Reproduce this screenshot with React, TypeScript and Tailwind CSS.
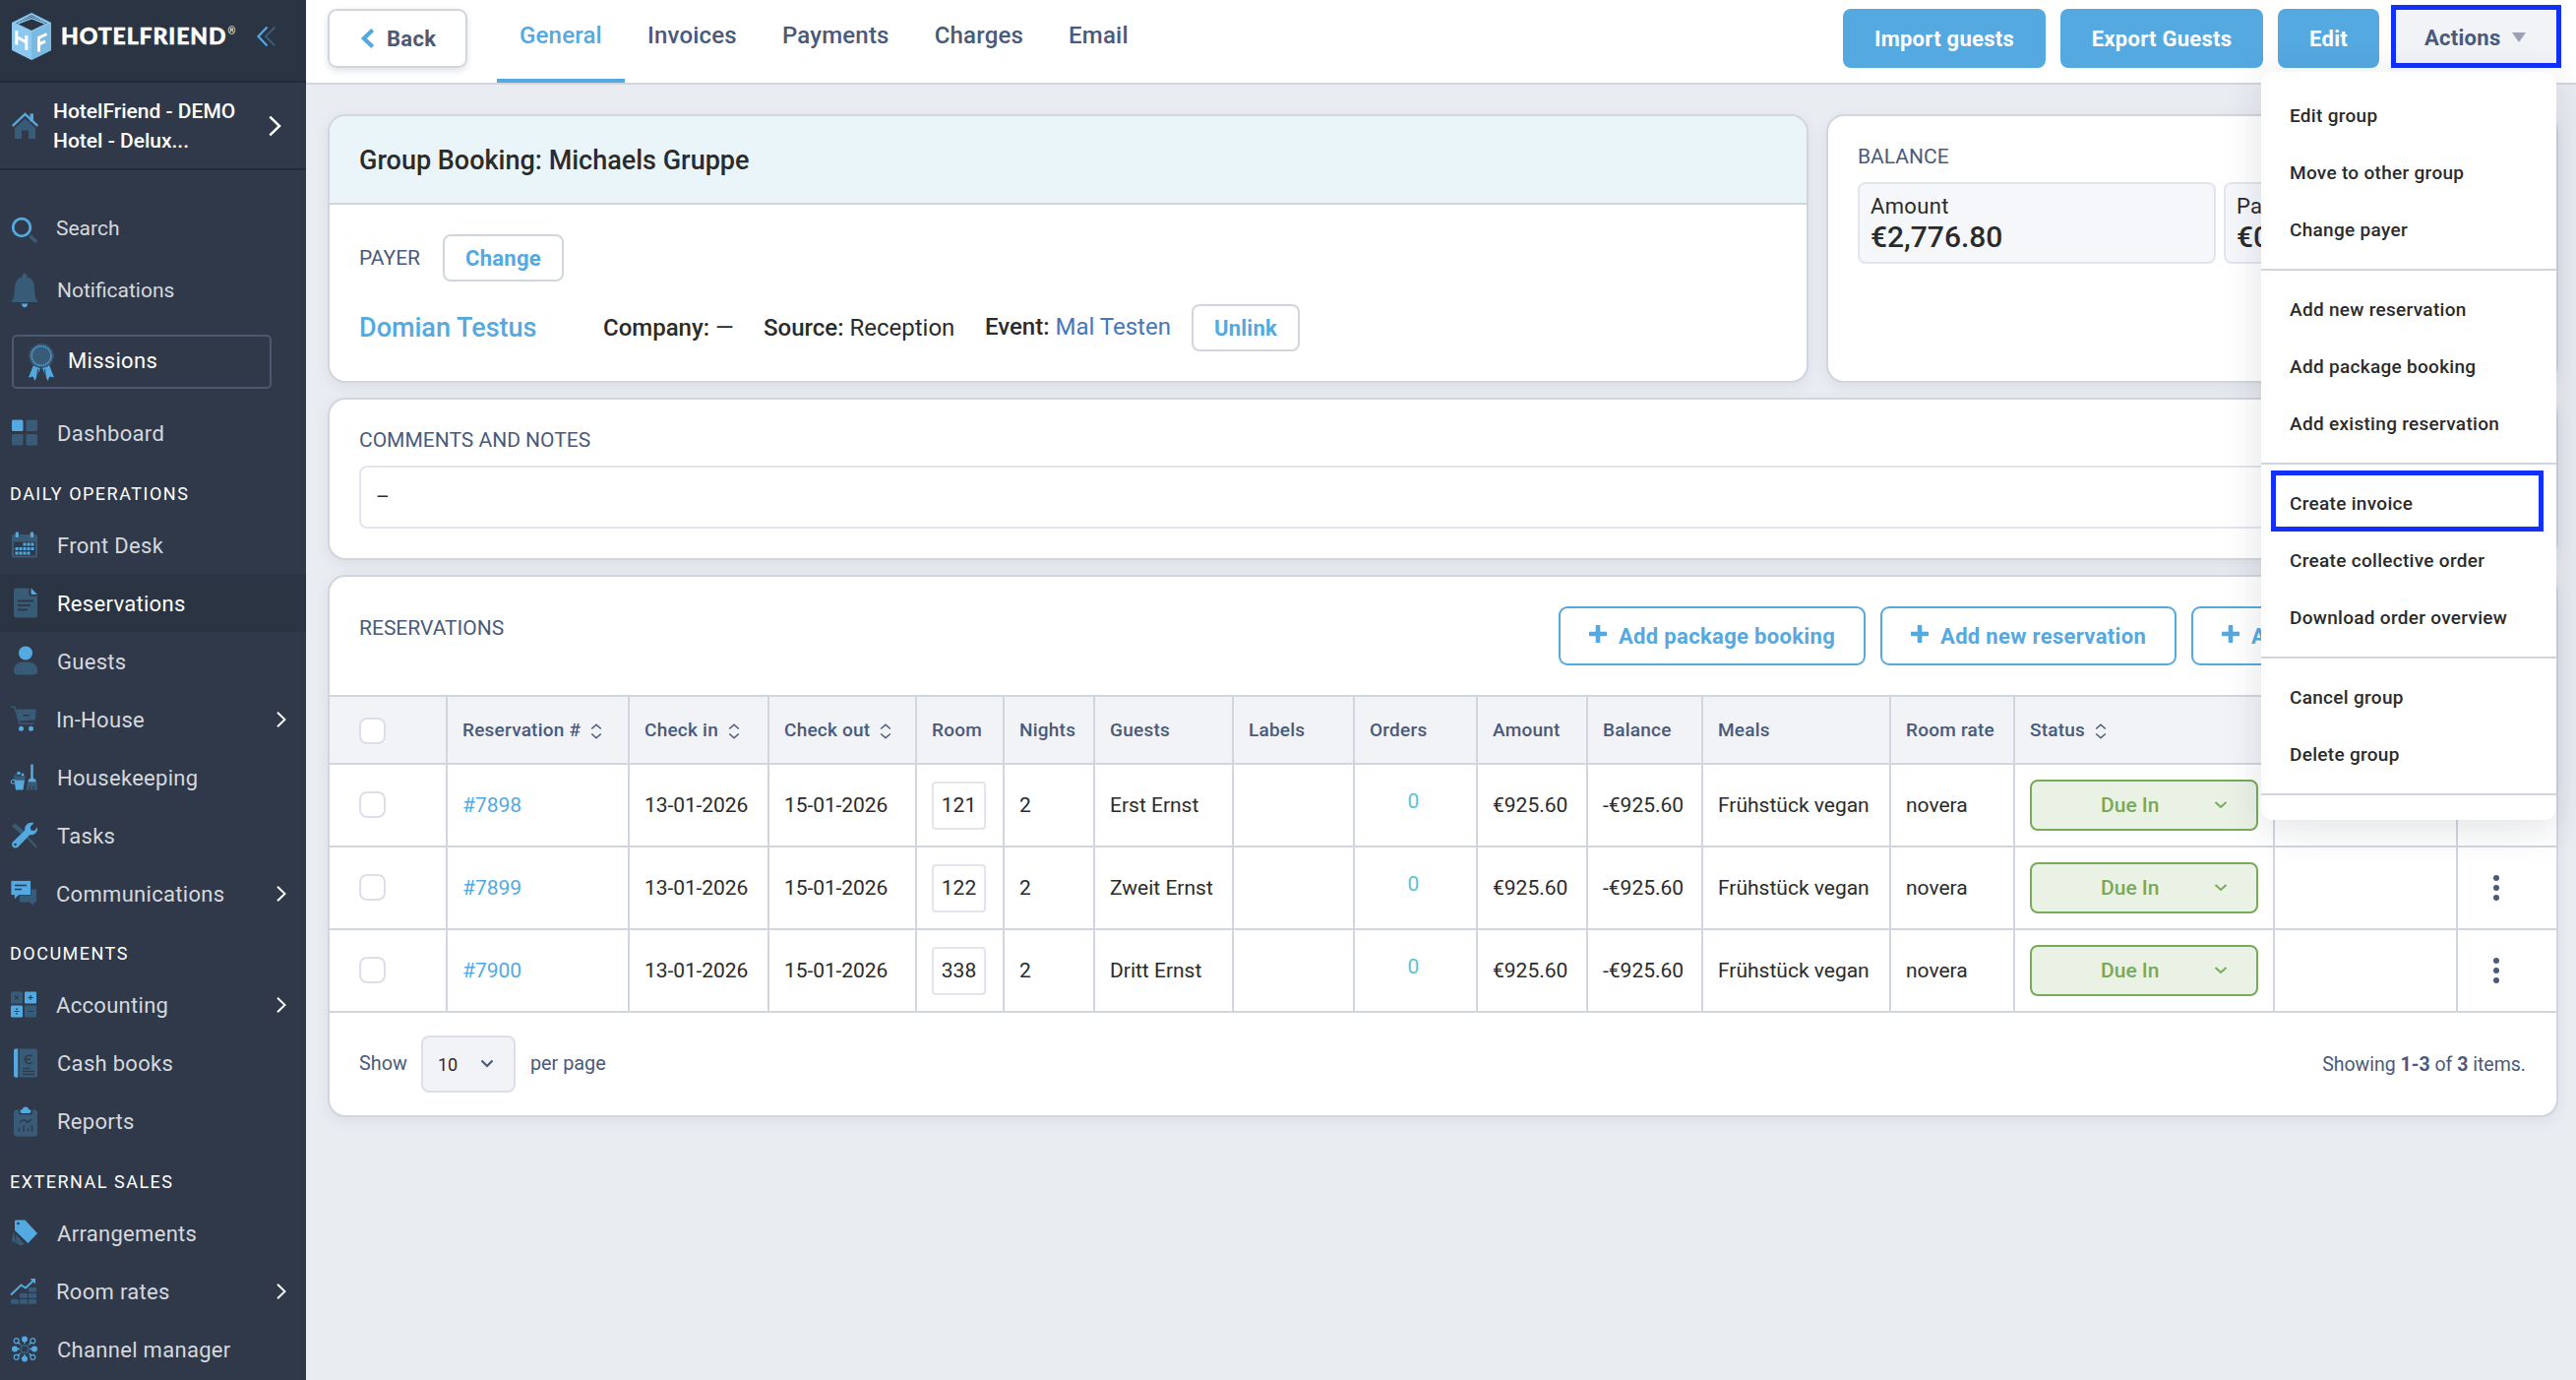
import React from "react";

type IconProps = { className?: string };

const B = "#54a9e0";
const S = "#385b78";
const D = "#303949";

function Glyph({ children }: { children: React.ReactNode }) {
  return (
    <svg width="30" height="40" viewBox="0 0 30 40" fill="none" className="shrink-0 overflow-visible">
      {children}
    </svg>
  );
}

const SearchIcon = () => (
  <Glyph>
    <path d="M20.5 26.5 L27 33" stroke={S} strokeWidth="3.4" />
    <circle cx="12" cy="18" r="8.8" stroke={B} strokeWidth="2.8" />
  </Glyph>
);
const BellIcon = () => (
  <Glyph>
    <path d="M15 1.5c1.6 0 2.3 1 2.3 2.4v1.3c4.6 1.2 7.2 4.600 7.600 9.400.4 5 .5 9.500 1.300 12.200.3 1.200 1.800 2 1.800 3V31H2v-1.200c0-1 1.500-1.800 1.800-3 .8-2.700.9-7.200 1.300-12.200.4-4.800 3-8.200 7.600-9.400V3.900c0-1.400.7-2.400 2.300-2.400z" fill={S} />
    <path d="M12 32.500h6.200c-.2 2.200-1.400 3.700-3.100 3.700S12.200 34.700 12 32.500z" fill={B} />
  </Glyph>
);
const MissionIcon = () => (
  <svg width="26" height="38" viewBox="0 0 26 38" fill="none" className="shrink-0">
    <path d="M5 22 L0 34.500 L4.500 33.500 L6.500 38 L12 25z M21 22 L26 34.500 L21.500 33.500 L19.500 38 L14 25z" fill={B} />
    <path d="M9.500 26 L8.500 36 M16.500 26 L17.500 36" stroke={D} strokeWidth="1" />
    <circle cx="13" cy="12.500" r="12" fill={S} stroke={S} strokeWidth="1.500" strokeDasharray="2.500 1.500" />
    <circle cx="13" cy="12.500" r="9.800" fill={S} stroke={B} strokeWidth="1.600" strokeDasharray="1.200 .8" />
  </svg>
);
const DashboardIcon = () => (
  <Glyph>
    <rect x="2" y="6.500" width="11.500" height="11.500" rx="1.500" fill={B} />
    <rect x="16.500" y="6.500" width="11.500" height="11.500" rx="1.500" fill={S} />
    <rect x="2" y="21" width="11.500" height="11.500" rx="1.500" fill={S} />
    <rect x="16.500" y="21" width="11.500" height="11.500" rx="1.500" fill={S} />
  </Glyph>
);
const CalendarIcon = () => (
  <Glyph>
    <path d="M4 9h22a2 2 0 0 1 2 2v19.500a2 2 0 0 1-2 2H4a2 2 0 0 1-2-2V11a2 2 0 0 1 2-2z" fill={S} />
    <rect x="4" y="16.500" width="22" height="14" fill={D} />
    <rect x="5.700" y="6.500" width="3.200" height="5.500" rx="1" fill={B} />
    <rect x="20.900" y="6.500" width="3.200" height="5.500" rx="1" fill={B} />
    {[13.5, 17.5, 21.5].map((x) => <rect key={x} x={x} y="17.500" width="3" height="3" fill={B} />)}
    {[5.5, 9.5, 13.5, 17.5, 21.5].map((x) => <rect key={x} x={x} y="22" width="3" height="3" fill={B} />)}
    {[5.5, 9.5, 13.5, 17.5].map((x) => <rect key={x} x={x} y="26.500" width="3" height="3" fill={B} />)}
  </Glyph>
);
const DocIcon = () => (
  <Glyph>
    <path d="M6.500 4.500H19.500V10.500a2 2 0 0 0 2 2H28V32a2.500 2.500 0 0 1-2.500 2.500h-19A2.500 2.500 0 0 1 4 32V7a2.500 2.500 0 0 1 2.500-2.500z" fill={S} />
    <path d="M21.500 4.500 L28 11H22.500a1 1 0 0 1-1-1z" fill={B} />
    <path d="M8 17.500H24 M8 22H21 M8 26.500H18" stroke={D} strokeWidth="1.800" />
  </Glyph>
);
const GuestIcon = () => (
  <Glyph>
    <circle cx="16" cy="11.500" r="7" fill={B} />
    <path d="M4 29.500c0-5 3.500-9 9-9h6c5.500 0 9 4 9 9 0 2.500-1.500 4-4 4H8c-2.500 0-4-1.500-4-4z" fill={S} />
  </Glyph>
);
const CartIcon = () => (
  <Glyph>
    <path d="M1 7.200H4.800L10 24.200H24.500" stroke={S} strokeWidth="1.600" />
    <path d="M6.500 9.500H27L25.500 20.500L9.800 21.500z" fill={S} />
    <path d="M13.500 15.800H19.500" stroke={D} strokeWidth="1.600" />
    <circle cx="11.500" cy="29.200" r="2.500" fill={B} />
    <circle cx="21.500" cy="29.200" r="2.500" fill={B} />
  </Glyph>
);
const CleanIcon = () => (
  <Glyph>
    <path d="M3.500 18.500h12v3.500h-12z" fill={S} />
    <path d="M4.500 22.500H15L13.500 32.500H6z" fill={B} />
    <path d="M5.500 22.500H3a1.500 1.500 0 0 0 0 3.500h2.500" stroke={B} strokeWidth="1.200" />
    <circle cx="9" cy="15.500" r="1.800" fill={B} />
    <circle cx="13" cy="17" r="1.500" fill={B} />
    <circle cx="6" cy="17.500" r="1.300" fill={S} />
    <path d="M21.200 6.500h2.600v14.500h-2.600z" fill={B} />
    <path d="M18.500 24.500c0-3 1.500-4 4-4s4 1 4.500 4z" fill={B} />
    <path d="M18 25h9.500l.5 7.500H16.800z" fill={S} />
    <path d="M20.500 28v4.500M24 28v4.500" stroke={D} strokeWidth="1" />
  </Glyph>
);
const ToolsIcon = () => (
  <Glyph>
    <path d="M2 10.500 L5 7.500 L14.500 15 L11.500 18.500z" fill={S} />
    <path d="M17 21 L27 31.500" stroke={S} strokeWidth="2" />
    <path d="M24.500 7 L20.800 11 L21.500 14.500 L24.800 15 L28 11.500 c.6 5-3 8.300-7.800 7.800 L8.300 31.500c-1.500 1.500-3.800 1.300-5.200 0-1.400-1.400-1.400-3.700 0-5.200L15.300 14.500C14.500 9.500 19 5.500 24.500 7z" fill={B} />
    <circle cx="5.500" cy="29" r="1.300" fill={D} />
  </Glyph>
);
const ChatIcon = () => (
  <Glyph>
    <path d="M10 15.500H27V28.500H24.500V32L20 28.500H10z" fill={S} />
    <path d="M1 6.500H21.500V21.500H9L4.500 26V21.500H1z" fill={B} stroke={D} strokeWidth=".8" />
    <path d="M5 11.500H17 M5 15.500H12" stroke={D} strokeWidth="1.700" />
  </Glyph>
);
const CalcIcon = () => (
  <Glyph>
    <rect x="1" y="5.500" width="12" height="12" rx="1.200" fill={S} />
    <rect x="15" y="5.500" width="12" height="12" rx="1.200" fill={B} />
    <rect x="1" y="19.500" width="12" height="12" rx="1.200" fill={B} />
    <rect x="15" y="19.500" width="12" height="12" rx="1.200" fill={S} />
    <path d="M5.200 9.700l3.600 3.600m0-3.600l-3.600 3.600M18.500 11.500h5m-2.500-2.500v5M4.500 25.500h5M18.500 25.500h5" stroke={D} strokeWidth="1.200" />
    <circle cx="7" cy="23.200" r=".9" fill={D} />
    <circle cx="7" cy="27.800" r=".9" fill={D} />
  </Glyph>
);
const BookIcon = () => (
  <Glyph>
    <rect x="4" y="4.500" width="24" height="29" rx="2" fill={S} />
    <path d="M6 4.500h2.200v29H6a2 2 0 0 1-2-2v-25a2 2 0 0 1 2-2z" fill={B} />
    <path d="M9.200 4.500v29" stroke={D} strokeWidth="1" />
    <path d="M22.500 12.200a4.200 4.200 0 1 0 0 6.300M14.500 15.300h6.500" stroke={D} strokeWidth="1.500" />
    <path d="M13 24.500h7.500M13 27.500h12M13 30.500h12" stroke={D} strokeWidth="1.300" />
  </Glyph>
);
const ReportIcon = () => (
  <Glyph>
    <rect x="4" y="7.500" width="24" height="27" rx="3" fill={S} />
    <path d="M9 7v3.500a2 2 0 0 0 2 2h10a2 2 0 0 0 2-2V7z" fill={D} />
    <path d="M10.500 7.500h2c.5-2 1.700-3 3.500-3s3 1 3.500 3h2V9a2 2 0 0 1-2 2h-7a2 2 0 0 1-2-2z" fill={B} />
    <path d="M10 20.500l4-3 4 2.500 4-2.500M9.500 26v3.500M14 23.500v6M18.500 26v3.500M22.500 23v6.500" stroke={D} strokeWidth="1.500" />
  </Glyph>
);
const TagIcon = () => (
  <Glyph>
    <path d="M4 17 L2 26.500 L6 28.500z M6 20 L6.500 29 L11 31.500 L15 30z" fill={S} />
    <path d="M6 5.500H15.500L28 19 L18.500 29 L5 16V7a1.500 1.500 0 0 1 1-1.500z" fill={B} />
    <circle cx="8.500" cy="9" r="1.300" fill={D} />
  </Glyph>
);
const RatesIcon = () => (
  <Glyph>
    <path d="M1 22.500 L11.500 12.500 L16 15.500 L24 8" stroke={B} strokeWidth="2" />
    <path d="M20.500 6h5.500v5.500z" fill={B} />
    {[[1, 27], [10, 27], [19, 27], [10, 21], [19, 21], [19, 15]].map(([x, y]) => (
      <rect key={`${x}-${y}`} x={x} y={y} width="8" height="4.800" rx=".8" fill={S} />
    ))}
  </Glyph>
);
const ChannelIcon = () => (
  <Glyph>
    <rect x="11.500" y="15" width="7" height="7" rx="1" stroke={S} strokeWidth="1.800" />
    <path d="M15 8v5M15 24v5M5 18.500h5M20 18.500h5" stroke={B} strokeWidth="1.400" />
    <path d="M8 11.500l2.500 2.500M22 11.500l-2.500 2.500M8 25.500l2.500-2.500M22 25.500l-2.500-2.500" stroke={B} strokeWidth="1.200" />
    {[[15, 8.5], [15, 28.5], [5, 18.5], [25, 18.5]].map(([x, y]) => <circle key={`${x}-${y}`} cx={x} cy={y} r="3" fill={B} />)}
    {[[6.7, 10.2], [23.3, 10.2], [6.7, 26.8], [23.3, 26.8]].map(([x, y]) => (
      <circle key={`${x}-${y}`} cx={x} cy={y} r="2.500" stroke={B} strokeWidth="1.200" />
    ))}
  </Glyph>
);

const Logo = () => (
  <svg width="40" height="48" viewBox="0 0 40 48" fill="none" className="shrink-0">
    <path d="M0 10 L20 0 L40 10 L40 38 L20 48 L0 38z" fill="#8cc8f0" />
    <path d="M20 19.500 L40 10 V38 L20 48z" fill="#7ab9e0" />
    <path d="M20 2.200 L36 10.200 L20 18 L4 10.200z" fill="#2b3443" />
    <path d="M3 10.500 L20 3.500 L37 10.500" stroke="#8cc8f0" strokeWidth="1" />
    <path d="M6 11 L20 5.500 L34 11" stroke="#8cc8f0" strokeWidth="1.600" />
    <path d="M4.800 18v14.500M14.800 23v15M4.800 24.500l10 5.500" stroke="#fff" strokeWidth="3" />
    <path d="M27.500 39.500V25.500L35.500 21.500M27.500 32l6.500-3.200" stroke="#fff" strokeWidth="3" />
  </svg>
);

const HomeIcon = () => (
  <svg width="27" height="27" viewBox="0 0 27 27" fill="none" className="shrink-0">
    <path d="M13.500 6.500 L24 16V27H17V18.500H10V27H3V16z" fill={S} />
    <path d="M18.500 1.500h3.500v8h-3.500z" fill={B} />
    <path d="M.8 14 L13.500 1.800 L26.200 14" stroke={B} strokeWidth="2.400" />
  </svg>
);

const ChevronRight = ({ className }: IconProps) => (
  <svg viewBox="0 0 10 16" fill="none" className={className}>
    <path d="M1 .8 L8.500 8 L1 15.200" stroke="#fff" strokeWidth="1.900" />
  </svg>
);

type Item = { label: string; icon: () => React.ReactElement; sub?: boolean; active?: boolean };

const groups: { title: string; items: Item[] }[] = [
  {
    title: "DAILY OPERATIONS",
    items: [
      { label: "Front Desk", icon: CalendarIcon },
      { label: "Reservations", icon: DocIcon, active: true },
      { label: "Guests", icon: GuestIcon },
      { label: "In-House", icon: CartIcon, sub: true },
      { label: "Housekeeping", icon: CleanIcon },
      { label: "Tasks", icon: ToolsIcon },
      { label: "Communications", icon: ChatIcon, sub: true },
    ],
  },
  {
    title: "DOCUMENTS",
    items: [
      { label: "Accounting", icon: CalcIcon, sub: true },
      { label: "Cash books", icon: BookIcon },
      { label: "Reports", icon: ReportIcon },
    ],
  },
  {
    title: "EXTERNAL SALES",
    items: [
      { label: "Arrangements", icon: TagIcon },
      { label: "Room rates", icon: RatesIcon, sub: true },
      { label: "Channel manager", icon: ChannelIcon },
    ],
  },
];

function NavRow({ item, first }: { item: Item; first: boolean }) {
  const Icon = item.icon;
  return (
    <div className={item.active ? "flex h-[59px] items-center bg-[#2b3443] pl-[10px] text-white" : "flex h-[59px] items-center pl-[10px] text-[#d5d8dd]"}>
      <Icon />
      <span className={`${item.sub ? "ml-[17px]" : "ml-[18px]"} ${first ? "pt-px" : "pb-px"} text-[22px]`}>{item.label}</span>
      {item.sub && <ChevronRight className={first ? "mr-[20px] ml-auto h-[16px] w-[10px]" : "mr-[20px] mb-px ml-auto h-[16px] w-[10px]"} />}
    </div>
  );
}

function Sidebar() {
  return (
    <aside className="flex w-[311px] shrink-0 flex-col bg-[#303949] tracking-[0.3px]">
      <div className="flex h-[84px] items-start border-b-2 border-[#222b3b] bg-[#2b3443] pt-[13px] pl-[12px]">
        <Logo />
        <div className="ml-[10px] flex h-[46px] w-[199px] items-center">
          <span className="font-[Lato] text-[23px] font-black tracking-[0.9px] text-white [-webkit-text-stroke:0.5px_white]">HOTELFRIEND</span>
          <span className="mb-[10px] ml-px text-[10px] text-white">®</span>
        </div>
        <svg width="20" height="20" viewBox="0 0 20 20" fill="none" className="mt-[14px]">
          <path d="M18.500 .5 L9 10 L18.500 19.500" stroke={S} strokeWidth="2.200" />
          <path d="M10.500 .5 L1.500 10 L10.500 19.500" stroke={B} strokeWidth="2.200" />
        </svg>
      </div>
      <div className="flex h-[89px] items-center border-b-2 border-[#222b3b] pl-[12px]">
        <HomeIcon />
        <div className="ml-[15px] text-[21px] leading-[30px] font-medium tracking-normal text-white">
          HotelFriend - DEMO
          <br />
          Hotel - Delux...
        </div>
        <ChevronRight className="mr-[25px] ml-auto h-[22px] w-[13px]" />
      </div>
      <div className="mt-[30px] flex h-[59px] items-center pl-[10px] text-[21px] tracking-normal text-[#d5d8dd]">
        <SearchIcon />
        <span className="ml-[17px] pt-px">Search</span>
      </div>
      <div className="mt-[4px] flex h-[59px] items-center pl-[10px] text-[21px] tracking-normal text-[#d5d8dd]">
        <BellIcon />
        <span className="ml-[18px] pt-px">Notifications</span>
      </div>
      <div className="mt-[15px] ml-[12px] flex h-[55px] w-[264px] items-center rounded-[5px] border-2 border-[#4b5872] pl-[15px] text-[22px] text-white">
        <MissionIcon />
        <span className="mb-[2px] ml-[14px]">Missions</span>
      </div>
      <div className="mt-[15px] flex h-[59px] items-center pl-[10px] text-[22px] text-[#d5d8dd]">
        <DashboardIcon />
        <span className="ml-[18px] pt-px">Dashboard</span>
      </div>
      {groups.map((g, gi) => (
        <div key={g.title}>
          <div className={`${gi === 0 ? "pt-[9px]" : "pt-[7px]"} flex h-[55px] items-center pl-[10px] text-[18px] tracking-[1.5px] text-white`}>{g.title}</div>
          {g.items.map((i) => (
            <NavRow key={i.label} item={i} first={gi === 0} />
          ))}
        </div>
      ))}
    </aside>
  );
}

const menuGroups = [
  ["Edit group", "Move to other group", "Change payer"],
  ["Add new reservation", "Add package booking", "Add existing reservation"],
  ["Create invoice", "Create collective order", "Download order overview"],
  ["Cancel group", "Delete group"],
];

function ActionsMenu() {
  return (
    <div className="absolute top-[73px] right-[20px] z-20 h-[760px] w-[300px] rounded-[12px] bg-white pt-[15px] shadow-[0_8px_40px_rgba(40,50,70,0.14)]">
      {menuGroups.map((g) => (
        <div key={g[0]} className="mb-[10px] border-b-2 border-[#d1d5de] pb-[11px]">
          {g.map((label) => (
            <div key={label} className="relative flex h-[58px] items-center pt-[2px] pl-[29px] text-[19px] font-medium tracking-[0.3px] text-[#2b2b2b]">
              {label}
              {label === "Create invoice" && (
                <span className="absolute top-[-4px] left-[10px] h-[62px] w-[277px] border-5 border-[#1230fa]" />
              )}
            </div>
          ))}
        </div>
      ))}
    </div>
  );
}

function TopBar() {
  return (
    <header className="relative flex h-[86px] items-start border-b-2 border-[#d1d5de] bg-white pl-[22px]">
      <button className="mt-[9px] flex h-[60px] w-[142px] items-center rounded-[9px] border-2 border-[#d1d5de] pl-[31px] text-[22px] font-bold tracking-[0.3px] text-[#4a5a7a] shadow-[0_3px_6px_rgba(60,70,90,0.15)]">
        <svg width="15" height="20" viewBox="0 0 15 20" fill="none">
          <path d="M12.700 1.500 L3.800 10 L12.700 18.500" stroke={B} strokeWidth="4.200" />
        </svg>
        <span className="ml-[12px]">Back</span>
      </button>
      <nav className="ml-[30px] flex h-[84px] text-[24px] font-medium tracking-[0.2px] text-[#4a5a7a]">
        <span className="border-b-4 border-[#54a9e0] px-[23px] pt-[18px] leading-[36px] text-[#54a9e0]">General</span>
        <span className="px-[23px] pt-[18px] leading-[36px]">Invoices</span>
        <span className="px-[23px] pt-[18px] leading-[36px]">Payments</span>
        <span className="px-[23px] pt-[18px] leading-[36px]">Charges</span>
        <span className="px-[23px] pt-[18px] leading-[36px]">Email</span>
      </nav>
      <div className="mt-[5px] mr-[15px] ml-auto flex text-[22px] font-bold tracking-[0.27px] text-white">
        <button className="mt-[4px] h-[60px] w-[206px] rounded-[8px] bg-[#54a9e0]">Import guests</button>
        <button className="mt-[4px] ml-[15px] h-[60px] w-[206px] rounded-[8px] bg-[#54a9e0]">Export Guests</button>
        <button className="mt-[4px] ml-[15px] h-[60px] w-[103px] rounded-[8px] bg-[#54a9e0]">Edit</button>
        <button className="ml-[12px] flex h-[64px] w-[173px] items-center border-5 border-[#1230fa] bg-[#f1f3f7] pt-[2px] pl-[29px] text-[#4a5a7a]">
          Actions
          <svg width="14" height="10" viewBox="0 0 14 10" className="ml-[12px]">
            <path d="M0 0H14L7 10z" fill="#9aa3b5" />
          </svg>
        </button>
      </div>
      <ActionsMenu />
    </header>
  );
}

function Sort() {
  return (
    <svg width="14" height="16" viewBox="0 0 14 16" fill="none" className="mt-[3px] ml-[9px]">
      <path d="M2.200 5.500 L7 1.200 L11.800 5.500 M2.200 10.500 L7 14.800 L11.800 10.500" stroke="#4a5a7a" strokeWidth="1.500" />
    </svg>
  );
}

const cols =
  "grid grid-cols-[118px_185px_142px_150px_89px_92px_141px_123px_125px_112px_117px_191px_126px_264px_186px_102px]";
const heads: [string, boolean?][] = [
  ["Reservation #", true], ["Check in", true], ["Check out", true], ["Room"], ["Nights"], ["Guests"], ["Labels"], ["Orders"],
  ["Amount"], ["Balance"], ["Meals"], ["Room rate"], ["Status", true], [""], [""],
];
const rows = [
  { id: "#7898", room: "121", guest: "Erst Ernst" },
  { id: "#7899", room: "122", guest: "Zweit Ernst" },
  { id: "#7900", room: "338", guest: "Dritt Ernst" },
];

function Cell({ children }: { children?: React.ReactNode }) {
  return <div className="flex items-center border-l-2 border-[#d1d5de] pl-[15px] whitespace-nowrap">{children}</div>;
}

const Txt = ({ children }: { children: React.ReactNode }) => <span className="pt-[2px]">{children}</span>;

const Check = () => <span className="ml-[30px] size-[27px] rounded-[8px] border-2 border-[#dcdfea] bg-white" />;

function Table() {
  return (
    <div className="border-t-2 border-[#d1d5de]">
      <div className={`${cols} h-[69px] border-b-2 border-[#d1d5de] bg-[#f1f3f7] text-[19px] font-medium tracking-[0.23px] text-[#4a5a7a]`}>
        <div className="flex items-center pt-px"><Check /></div>
        {heads.map(([h, s], i) => (
          <Cell key={i}>
            <span className="pt-px">{h}</span>
            {s && <Sort />}
          </Cell>
        ))}
      </div>
      {rows.map((r) => (
        <div key={r.id} className={`${cols} h-[84px] border-b-2 border-[#d1d5de] text-[21px] text-[#2b2b2b]`}>
          <div className="flex items-center pb-px"><Check /></div>
          <Cell><span className="pt-[2px] text-[#54a9e0]">{r.id}</span></Cell>
          <Cell><span className="pt-[2px] tracking-[-0.08px]">13-01-2026</span></Cell>
          <Cell><span className="pt-[2px] tracking-[-0.08px]">15-01-2026</span></Cell>
          <Cell>
            <span className="flex h-[49px] w-[55px] items-center justify-center rounded-[4px] border-2 border-[#e2e5ee] pt-px">{r.room}</span>
          </Cell>
          <Cell><Txt>2</Txt></Cell>
          <Cell><Txt>{r.guest}</Txt></Cell>
          <Cell />
          <div className="flex items-center justify-center border-l-2 border-[#d1d5de] pr-[4px] pb-[7px] text-[#5bc3d2]">0</div>
          <Cell><Txt>€925.60</Txt></Cell>
          <Cell><Txt>-€925.60</Txt></Cell>
          <Cell><Txt>Frühstück vegan</Txt></Cell>
          <Cell><Txt>novera</Txt></Cell>
          <Cell>
            <span className="flex h-[52px] w-[232px] items-center rounded-[8px] border-2 border-[#77aa59] bg-[#eaf2e6] pl-[70px] font-medium text-[#77aa59]">
              <Txt>Due In</Txt>
              <svg width="14" height="8" viewBox="0 0 14 8" fill="none" className="mr-[29px] ml-auto">
                <path d="M1.500 1 L7 6 L12.500 1" stroke="#77aa59" strokeWidth="2" />
              </svg>
            </span>
          </Cell>
          <Cell />
          <div className="flex flex-col items-center justify-center gap-[4px] border-l-2 border-[#d1d5de] pr-[22px]">
            <i className="size-[6px] rounded-full bg-[#4a5a7a]" />
            <i className="size-[6px] rounded-full bg-[#4a5a7a]" />
            <i className="size-[6px] rounded-full bg-[#4a5a7a]" />
          </div>
        </div>
      ))}
    </div>
  );
}

function AddButton({ label }: { label: string }) {
  return (
    <button className="flex h-[60px] shrink-0 items-center rounded-[9px] border-2 border-[#54a9e0] px-[29px] text-[22px] font-bold tracking-[0.33px] whitespace-nowrap text-[#54a9e0]">
      <svg width="18" height="18" viewBox="0 0 18 18" className="mb-[4px]">
        <path d="M7.500 0h3a.8.8 0 0 1 .8.8v5.900h5.900a.8.8 0 0 1 .8.8v3a.8.8 0 0 1-.8.8h-5.900v5.900a.8.8 0 0 1-.8.8h-3a.8.8 0 0 1-.8-.8v-5.900H.8a.8.8 0 0 1-.8-.8v-3a.8.8 0 0 1 .8-.8h5.900V.8a.8.8 0 0 1 .8-.8z" fill={B} />
      </svg>
      <span className="ml-[12px]">{label}</span>
    </button>
  );
}

const card = "rounded-[18px] border-2 border-[#d1d5de] bg-white shadow-[0_4px_14px_rgba(60,70,90,0.08)]";

const balances = [
  { label: "Amount", value: "€2,776.80", size: "w-[364px] shrink-0" },
  { label: "Paid", value: "€0.00", size: "min-w-0 flex-1" },
];

export default function App() {
  return (
    <div className="flex h-screen w-full overflow-hidden bg-[#e9ecf1] font-[Roboto,sans-serif] whitespace-nowrap text-[#2b2b2b]">
      <Sidebar />
      <div className="flex min-w-0 flex-1 flex-col">
        <TopBar />
        <main className="flex flex-col pt-[30px] pr-[18px] pl-[22px]">
          <div className="flex gap-[18px]">
            <section className={`${card} h-[273px] w-[1505px] shrink-0 overflow-hidden`}>
              <div className="flex h-[90px] items-center border-b-2 border-[#d1d5de] bg-[#eaf5fa] pt-[2px] pl-[30px] text-[27px] font-medium">
                Group Booking: Michaels Gruppe
              </div>
              <div className="mt-[30px] flex h-[48px] items-center pl-[30px]">
                <span className="w-[85px] pt-[2px] text-[21px] text-[#4a5a7a]">PAYER</span>
                <button className="h-[48px] w-[123px] rounded-[8px] border-2 border-[#d1d5de] text-[22px] font-bold tracking-[0.27px] text-[#54a9e0]">Change</button>
              </div>
              <div className="mt-[23px] flex h-[48px] items-center pl-[30px] text-[24px]">
                <span className="w-[248px] text-[27px] font-medium text-[#54a9e0]">Domian Testus</span>
                <span className="w-[163px]"><b className="font-medium">Company:</b> —</span>
                <span className="w-[225px]"><b className="font-medium">Source:</b> Reception</span>
                <span className="mb-[2px] w-[210px]"><b className="font-medium">Event:</b> <span className="text-[#4578b8]">Mal Testen</span></span>
                <button className="h-[48px] w-[110px] rounded-[8px] border-2 border-[#d1d5de] text-[22px] font-bold tracking-[0.27px] text-[#54a9e0]">Unlink</button>
              </div>
            </section>
            <section className={`${card} min-w-0 flex-1 px-[30px] pt-[29px]`}>
              <div className="text-[21px] leading-[24px] text-[#4a5a7a]">BALANCE</div>
              <div className="mt-[14px] flex gap-[8px]">
                {balances.map((b) => (
                  <div key={b.label} className={`${b.size} h-[83px] rounded-[8px] border-2 border-[#e2e5ee] bg-[#f5f7fb] pt-[9px] pl-[11px]`}>
                    <div className="text-[22px] leading-[28px] tracking-[0.35px]">{b.label}</div>
                    <div className="text-[30px] leading-[34px] font-medium">{b.value}</div>
                  </div>
                ))}
              </div>
            </section>
          </div>
          <section className={`${card} mt-[15px] h-[165px] px-[30px] pt-[29px]`}>
            <div className="text-[21px] leading-[24px] text-[#4a5a7a]">COMMENTS AND NOTES</div>
            <div className="mt-[14px] flex h-[64px] items-center rounded-[8px] border-2 border-[#e2e5ee] pt-[2px] pl-[15px] text-[21px]">–</div>
          </section>
          <section className={`${card} mt-[15px] flex h-[551px] flex-col overflow-hidden`}>
            <div className="flex h-[120px] items-start pt-[30px] pl-[30px]">
              <span className="mt-[10px] w-[1219px] shrink-0 text-[21px] leading-[24px] text-[#4a5a7a]">RESERVATIONS</span>
              <div className="flex gap-[15px]">
                <AddButton label="Add package booking" />
                <AddButton label="Add new reservation" />
                <AddButton label="Add existing reservation" />
              </div>
            </div>
            <Table />
            <div className="flex flex-1 items-center px-[30px] text-[19.8px] text-[#4a5a7a]">
              <span className="w-[63px]">Show</span>
              <span className="mr-[15px] flex h-[58px] w-[96px] items-center rounded-[8px] border-2 border-[#dcdfea] bg-[#f1f3f7] pl-[15px] text-[18px] text-[#2b2b2b]">
                10
                <svg width="14" height="10" viewBox="0 0 14 10" fill="none" className="mr-[20px] ml-auto">
                  <path d="M1.500 1.500 L7 7 L12.500 1.500" stroke="#4a5a7a" strokeWidth="2.200" />
                </svg>
              </span>
              per page
              <span className="mr-px ml-auto pt-px text-[19.5px]">Showing <b>1-3</b> of <b>3</b> items.</span>
            </div>
          </section>
        </main>
      </div>
    </div>
  );
}
